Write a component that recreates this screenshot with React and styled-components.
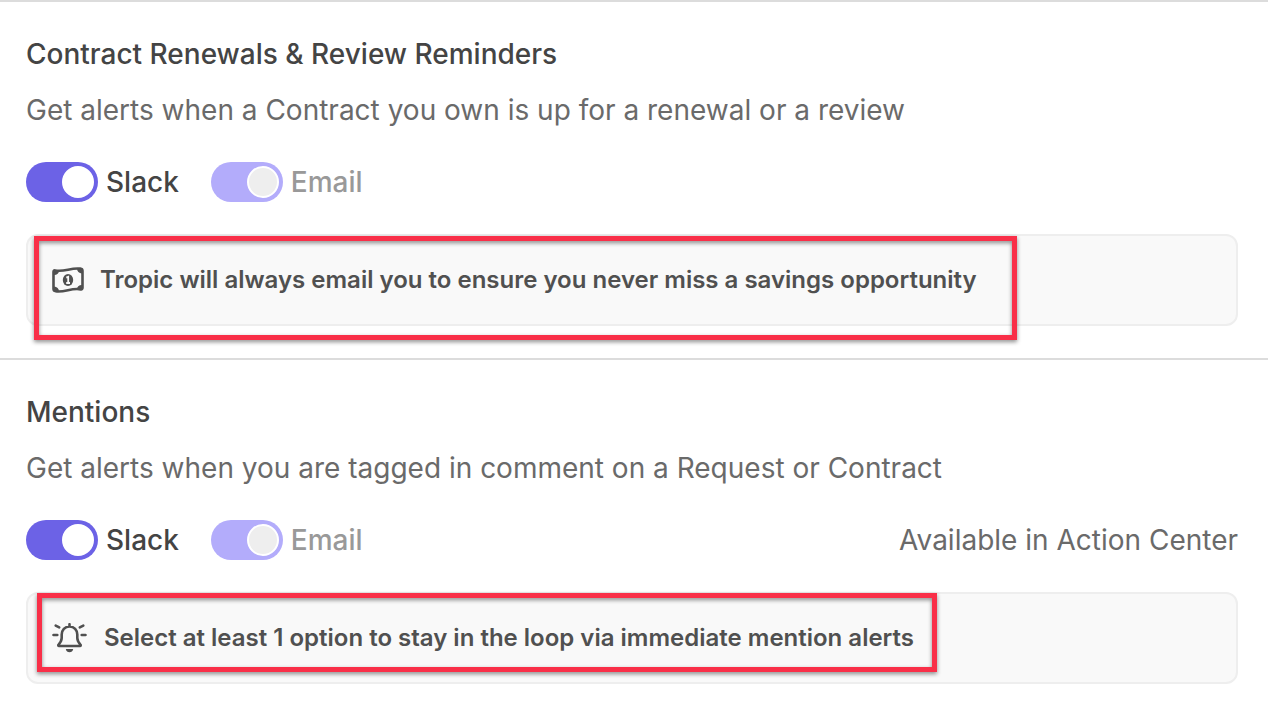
import React, { useState } from 'react';
import styled, { createGlobalStyle } from 'styled-components';

const GlobalStyle = createGlobalStyle`
  *,
  *::before {
    box-sizing: border-box;
  }
  body {
    margin: 0;
    background: #ffffff;
    color: #444444;
    font-family: Inter, "Liberation Sans", sans-serif;
    font-size: 28px;
    line-height: 40px;
  }
`;

const Section = styled.section`
  display: flex;
  flex-direction: column;
  gap: 32px;
  padding: 32px 30px 32px 26px;
  border-top: 2px solid #dcdcdc;
`;

const Heading = styled.header`
  display: flex;
  flex-direction: column;
  gap: 16px;
`;

const Title = styled.h2`
  margin: 0;
  font-size: 28px;
  font-weight: 500;
`;

const Description = styled.p`
  margin: 0;
  color: #6a6a6a;
`;

const Channels = styled.div`
  display: flex;
  align-items: center;
  gap: 32px;
`;

const SwitchLabel = styled.label`
  display: flex;
  align-items: center;
  gap: 8px;
  font-weight: 500;
  color: ${({ $locked }) => ($locked ? '#999999' : '#444444')};
`;

const SwitchInput = styled.input`
  appearance: none;
  display: flex;
  align-items: center;
  width: 72px;
  height: 40px;
  margin: 0;
  padding: 4px;
  border-radius: 20px;
  background: #c9c9c9;
  cursor: pointer;

  &::before {
    content: "";
    width: 32px;
    height: 32px;
    border: 2px solid #ffffff;
    border-radius: 50%;
    background: #ffffff;
  }
  &:checked {
    justify-content: flex-end;
    background: #6c62e6;
  }
  &:disabled {
    background: #b3acfb;
    cursor: default;
  }
  &:disabled::before {
    background: #eeeeee;
  }
`;

const Availability = styled.span`
  margin-left: auto;
  color: #6a6a6a;
`;

const Note = styled.div`
  display: flex;
  padding: 24px;
  border: 2px solid #eeeeee;
  border-radius: 12px;
  background: #f9f9f9;
`;

const NoteContent = styled.div`
  position: relative;
  display: flex;
  align-items: center;
  gap: 16px;
  color: #505050;
  font-size: 24px;
  font-weight: 600;
`;

const Highlight = styled.span`
  position: absolute;
  inset: ${({ $inset }) => $inset};
  border: 5px solid #f92f48;
  filter: drop-shadow(0 2px 2px rgba(0, 0, 0, 0.45));
  pointer-events: none;
`;

const MoneyIcon = () => (
  <svg width="32" height="26" viewBox="0 0 32 26" fill="none" aria-hidden="true">
    <path
      d="M1.5 4.8C1.5 3.7 2.2 3.2 3.2 3.4C12 5.4 19 .3 28.3 1.6C29.7 1.8 30.5 2.5 30.5 3.8V20.8C30.5 22 29.8 22.6 28.8 22.4C20 20.4 13 25.6 3.7 24.3C2.3 24.1 1.5 23.4 1.5 22.1Z"
      stroke="currentColor"
      strokeWidth="2.6"
    />
    <path
      d="M2 3.5H7C7 6.3 5.2 8 2 8ZM2 19.5C5 19.7 7 21.5 7 24.5L2 24ZM30 6.5C27 6.3 25 4.5 25 1.5L30 2ZM30 22.5H25C25 19.7 26.8 18 30 18Z"
      fill="currentColor"
    />
    <ellipse cx="16" cy="13" rx="5.2" ry="6" fill="currentColor" />
    <path d="M14.3 10.6L16.2 9.8V15.8M14.2 16H18" stroke="#f9f9f9" strokeWidth="1.8" />
  </svg>
);

const BellIcon = () => (
  <svg
    width="36"
    height="30"
    viewBox="0 0 36 30"
    fill="none"
    stroke="currentColor"
    strokeWidth="2.6"
    strokeLinecap="round"
    strokeLinejoin="round"
    aria-hidden="true"
  >
    <path d="M17.5 1.2V3.5M17.5 3.5C12.8 3.5 9.7 7 9.7 11.6V15C9.7 18 8.2 19.8 6.5 21.8C6.1 22.4 6.4 23 7 23H28C28.6 23 28.9 22.4 28.5 21.8C26.8 19.8 25.3 18 25.3 15V11.6C25.3 7 22.2 3.5 17.5 3.5Z" />
    <path d="M13.8 26H21.2C20.8 28.2 19.4 29.2 17.5 29.2S14.2 28.2 13.8 26Z" fill="currentColor" stroke="none" />
    <path d="M1.5 12H5.3M29.7 12H33.5M3.7 2.6L7.2 4.4M31.3 2.6L27.8 4.4" />
  </svg>
);

const Switch = ({ id, label, locked }) => {
  const [on, setOn] = useState(true);

  return (
    <SwitchLabel htmlFor={id} $locked={locked}>
      <SwitchInput
        id={id}
        type="checkbox"
        role="switch"
        checked={on}
        disabled={locked}
        onChange={e => setOn(e.target.checked)}
      />
      {label}
    </SwitchLabel>
  );
};

const alerts = [
  {
    id: 'renewals',
    title: 'Contract Renewals & Review Reminders',
    description: 'Get alerts when a Contract you own is up for a renewal or a review',
    note: 'Tropic will always email you to ensure you never miss a savings opportunity',
    Icon: MoneyIcon,
    inset: '-24px -40px -40px -18px',
  },
  {
    id: 'mentions',
    title: 'Mentions',
    description: 'Get alerts when you are tagged in comment on a Request or Contract',
    availability: 'Available in Action Center',
    note: 'Select at least 1 option to stay in the loop via immediate mention alerts',
    Icon: BellIcon,
    inset: '-25px -23px -14px -15px',
  },
];

const App = () => (
  <>
    <GlobalStyle />
    <main>
      {alerts.map(({ id, title, description, availability, note, Icon, inset }) => (
        <Section key={id}>
          <Heading>
            <Title>{title}</Title>
            <Description>{description}</Description>
          </Heading>
          <Channels>
            <Switch id={`${id}-slack`} label="Slack" />
            <Switch id={`${id}-email`} label="Email" locked />
            {availability && <Availability>{availability}</Availability>}
          </Channels>
          <Note>
            <NoteContent>
              <Icon />
              {note}
              <Highlight $inset={inset} />
            </NoteContent>
          </Note>
        </Section>
      ))}
    </main>
  </>
);

export default App;
